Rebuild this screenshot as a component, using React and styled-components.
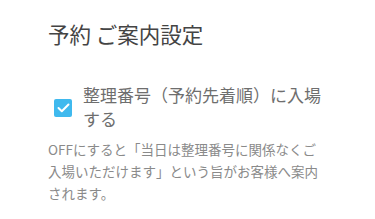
import React from 'react'
import styled, { createGlobalStyle } from 'styled-components'

const GlobalStyle = createGlobalStyle`
  body {
    margin: 0;
    background: #fff;
    font-family: 'Noto Sans CJK JP', 'Noto Sans', sans-serif;
  }
`;

const Section = styled.section`
  width: 375px;
  padding: 19px 48px 0;
  box-sizing: border-box;
`;

const Title = styled.h2`
  margin: 0;
  font-size: 21.5px;
  font-weight: 400;
  line-height: 30px;
  color: #444;
`;

const Option = styled.label`
  display: flex;
  align-items: center;
  gap: 11px;
  margin-top: 34px;
  padding-left: 6px;
`;

const Box = styled.span`
  flex: none;
  width: 18px;
  height: 18px;
  margin-top: 2px;
  border-radius: 2px;
  background: ${p => (p.checked ? '#3fb9ee' : '#fff')};
  display: flex;
  align-items: center;
  justify-content: center;
`;

const LabelText = styled.span`
  font-size: 17px;
  line-height: 24px;
  color: #6e6e6e;
`;

const Note = styled.p`
  margin: 7px 0 0;
  font-size: 13.5px;
  line-height: 22px;
  color: #8a8a8a;
`;

const App = () => {
  return (
    <Section>
      <GlobalStyle />
      <Title>予約 ご案内設定</Title>
      <Option>
        <Box checked>
          <svg width="13" height="10" viewBox="0 0 13 10">
            <path d="M1.5 5 L4.8 8.2 L11.5 1.5" fill="none" stroke="#fff" strokeWidth="2" strokeLinecap="round" strokeLinejoin="round" />
          </svg>
        </Box>
        <LabelText>整理番号（予約先着順）に入場する</LabelText>
      </Option>
      <Note>OFFにすると「当日は整理番号に関係なくご入場いただけます」という旨がお客様へ案内されます。</Note>
    </Section>
  )
}

export default App
